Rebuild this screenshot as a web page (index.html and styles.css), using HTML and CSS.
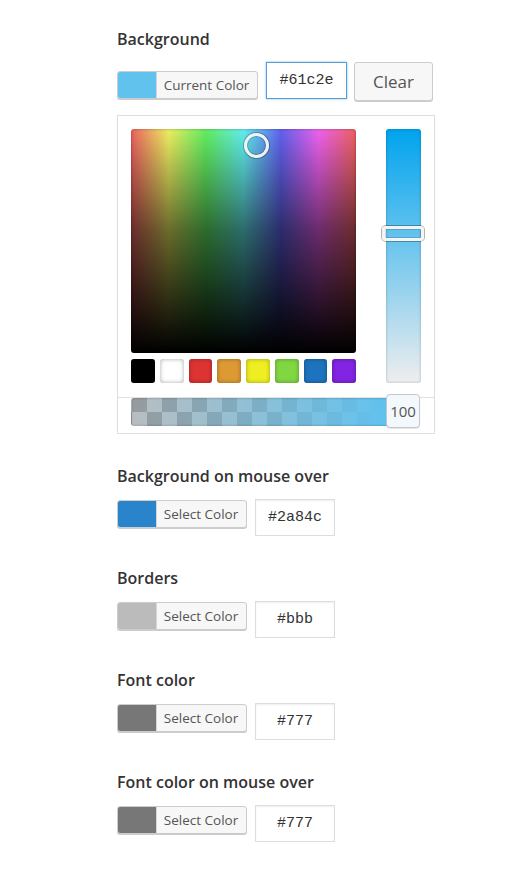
FILE: index.html
```html
<!DOCTYPE html>
<html lang="en">
<head>
<meta charset="utf-8">
<title>Color settings</title>
<link rel="stylesheet" href="styles.css">
</head>
<body>
<div class="page">
  <section class="field field-first">
    <h3 class="label">Background</h3>
    <div class="row row-top">
      <button class="color-btn color-btn-current" type="button">
        <span class="swatch" style="background:#61c2ee"></span>
        <span class="btn-text">Current Color</span>
      </button>
      <input class="hex hex-focus" type="text" value="#61c2e">
      <button class="clear-btn" type="button">Clear</button>
    </div>
    <div class="picker">
      <div class="picker-main">
        <div class="picker-left">
          <div class="square">
            <span class="square-handle"></span>
          </div>
          <div class="palette">
            <span class="pal" style="background:#000000"></span>
            <span class="pal" style="background:#ffffff"></span>
            <span class="pal" style="background:#dd3333"></span>
            <span class="pal" style="background:#dd9933"></span>
            <span class="pal" style="background:#eeee22"></span>
            <span class="pal" style="background:#81d742"></span>
            <span class="pal" style="background:#1e73be"></span>
            <span class="pal" style="background:#8224e3"></span>
          </div>
        </div>
        <div class="strip">
          <span class="strip-handle"></span>
        </div>
      </div>
      <div class="alpha-wrap">
        <div class="alpha">
          <span class="alpha-handle">100</span>
        </div>
      </div>
    </div>
  </section>

  <section class="field">
    <h3 class="label">Background on mouse over</h3>
    <div class="row">
      <button class="color-btn" type="button">
        <span class="swatch" style="background:#2a84cc"></span>
        <span class="btn-text">Select Color</span>
      </button>
      <input class="hex" type="text" value="#2a84c">
    </div>
  </section>

  <section class="field">
    <h3 class="label">Borders</h3>
    <div class="row">
      <button class="color-btn" type="button">
        <span class="swatch" style="background:#bbbbbb"></span>
        <span class="btn-text">Select Color</span>
      </button>
      <input class="hex" type="text" value="#bbb">
    </div>
  </section>

  <section class="field">
    <h3 class="label">Font color</h3>
    <div class="row">
      <button class="color-btn" type="button">
        <span class="swatch" style="background:#777777"></span>
        <span class="btn-text">Select Color</span>
      </button>
      <input class="hex" type="text" value="#777">
    </div>
  </section>

  <section class="field">
    <h3 class="label">Font color on mouse over</h3>
    <div class="row">
      <button class="color-btn" type="button">
        <span class="swatch" style="background:#777777"></span>
        <span class="btn-text">Select Color</span>
      </button>
      <input class="hex" type="text" value="#777">
    </div>
  </section>
</div>
</body>
</html>
```

FILE: styles.css
```css
* { box-sizing: border-box; }

html, body {
  margin: 0;
  padding: 0;
  background: #ffffff;
}

body {
  font-family: "Open Sans", "Liberation Sans", Arial, sans-serif;
  color: #333;
}

.page {
  padding: 29px 0 0 117px;
}

.field {
  margin-top: 32px;
}

.field-first {
  margin-top: 0;
}

.field-first + .field {
  margin-top: 32px;
}

.label {
  margin: 0;
  font-size: 16px;
  line-height: 20px;
  font-weight: 600;
  color: #333;
}

.row {
  display: flex;
  align-items: flex-start;
  margin-top: 13px;
}

.row-top {
  margin-top: 13px;
}

.color-btn {
  display: flex;
  align-items: stretch;
  height: 28px;
  width: 130px;
  margin: 1px 0 0 0;
  padding: 0;
  border: 1px solid #ccc;
  border-radius: 3px;
  background: #f7f7f7;
  box-shadow: 0 1px 0 #ccc;
  overflow: hidden;
  font-family: inherit;
  cursor: pointer;
}

.color-btn-current {
  width: 141px;
  margin-top: 9px;
}

.swatch {
  width: 38px;
  flex: 0 0 38px;
}

.btn-text {
  flex: 1;
  display: flex;
  align-items: center;
  justify-content: center;
  border-left: 1px solid #d6d6d6;
  font-size: 13.5px;
  color: #555;
  padding-right: 1px;
}

.hex {
  display: block;
  width: 80px;
  height: 37px;
  margin: 0 0 0 8px;
  padding: 0;
  border: 1px solid #ddd;
  box-shadow: inset 0 1px 2px rgba(0, 0, 0, 0.07);
  background: #fff;
  font-family: "Liberation Mono", "DejaVu Sans Mono", monospace;
  font-size: 15px;
  color: #333;
  text-align: center;
  outline: none;
}

.hex-focus {
  width: 81px;
  border-color: #5b9dd9;
  box-shadow: 0 0 2px rgba(30, 140, 190, 0.6);
}

.clear-btn {
  width: 79px;
  height: 39px;
  margin: 0 0 0 7px;
  padding: 0;
  border: 1px solid #ccc;
  border-radius: 3px;
  background: #f7f7f7;
  box-shadow: 0 1px 0 #ccc;
  font-family: inherit;
  font-size: 17px;
  color: #555;
  cursor: pointer;
}

/* picker */
.picker {
  width: 318px;
  margin-top: 14px;
  border: 1px solid #dedede;
  background: #fff;
}

.picker-main {
  display: flex;
  padding: 13px 13px 14px 13px;
  gap: 30px;
}

.picker-left {
  width: 225px;
  display: flex;
  flex-direction: column;
  gap: 6px;
}

.square {
  position: relative;
  height: 224px;
  border-radius: 3px;
  background:
    linear-gradient(to bottom, rgba(0, 0, 0, 0) 0%, rgba(0, 0, 0, 0.55) 45%, rgba(0, 0, 0, 1) 100%),
    linear-gradient(to right,
      rgb(238, 97, 97) 0%,
      rgb(238, 238, 97) 16.67%,
      rgb(97, 238, 97) 33.33%,
      rgb(97, 238, 238) 50%,
      rgb(97, 97, 238) 66.67%,
      rgb(238, 97, 238) 83.33%,
      rgb(238, 97, 97) 100%);
  box-shadow: inset 0 0 3px rgba(0, 0, 0, 0.35);
}

.square-handle {
  position: absolute;
  left: 113px;
  top: 4px;
  width: 25px;
  height: 25px;
  border-radius: 50%;
  border: 3px solid #f2f2f2;
  box-shadow: 0 0 0 1px rgba(0, 0, 0, 0.25), inset 0 0 0 1px rgba(0, 0, 0, 0.2);
  background: transparent;
}

.palette {
  display: grid;
  grid-template-columns: repeat(8, 1fr);
  gap: 5px;
  height: 24px;
}

.pal {
  border-radius: 3px;
  box-shadow: inset 0 0 4px rgba(0, 0, 0, 0.35);
}

.strip {
  position: relative;
  width: 35px;
  height: 254px;
  border-radius: 3px;
  background: linear-gradient(to bottom, rgb(0, 163, 238) 0%, rgb(238, 238, 238) 100%);
  box-shadow: inset 0 0 3px rgba(0, 0, 0, 0.25);
}

.strip-handle {
  position: absolute;
  left: -4px;
  right: -3px;
  top: 97px;
  height: 15px;
  border: 3px solid #f4f4f4;
  border-radius: 4px;
  box-shadow: 0 0 0 1px rgba(0, 0, 0, 0.3), inset 0 0 0 1px rgba(0, 0, 0, 0.15);
}

.alpha-wrap {
  border-top: 1px solid #e2e2e2;
  padding: 0 14px 7px 13px;
}

.alpha {
  position: relative;
  height: 28px;
  border-radius: 3px;
  background-image:
    linear-gradient(to right, rgba(97, 194, 238, 0) 0%, rgba(97, 194, 238, 1) 88%),
    conic-gradient(#b9bec1 0 25%, #979b9e 0 50%, #b9bec1 0 75%, #979b9e 0);
  background-size: 100% 100%, 30px 28px;
  background-position: 0 0, 1px 0;
  box-shadow: inset 0 0 3px rgba(0, 0, 0, 0.25);
}

.alpha-handle {
  position: absolute;
  right: 0;
  top: -4px;
  width: 34px;
  height: 34px;
  display: flex;
  align-items: center;
  justify-content: center;
  border: 1px solid #c4c8cc;
  border-radius: 4px;
  background: #f3f8fc;
  box-shadow: 0 1px 1px rgba(0, 0, 0, 0.1);
  font-size: 15px;
  color: #555;
}
```
